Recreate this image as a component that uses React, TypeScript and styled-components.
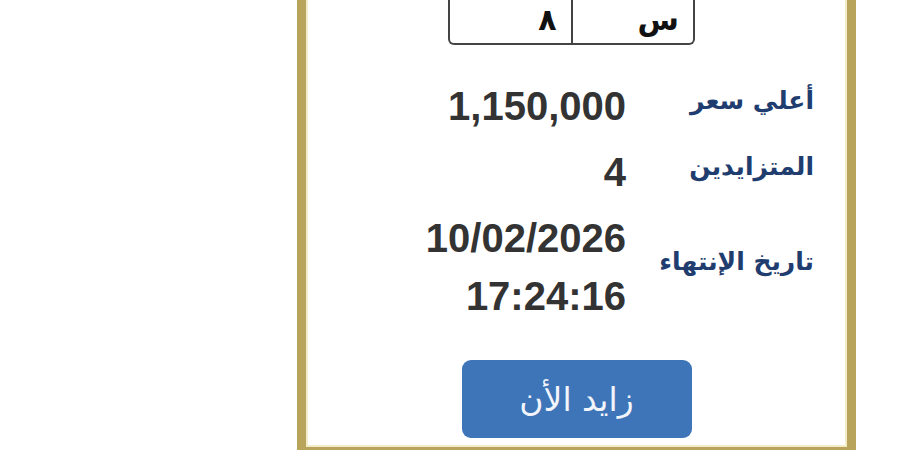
import React from 'react';
import styled, {createGlobalStyle} from "styled-components";

const GlobalStyle = createGlobalStyle`
  body {
    margin: 0;
    background: #ffffff;
    font-family: "DejaVu Sans", "Liberation Sans", sans-serif;
  }
`

type RowType = {
    label: string
    values: string[]
}

const rows: RowType[] = [
    {label: 'أعلي سعر', values: ['1,150,000']},
    {label: 'المتزايدين', values: ['4']},
    {label: 'تاريخ الإنتهاء', values: ['10/02/2026', '17:24:16']},
]

export default function App() {
    return (
        <Page>
            <GlobalStyle/>
            <Card dir="rtl">
                <Plate>
                    <PlateCell>س</PlateCell>
                    <PlateCell>٨</PlateCell>
                </Plate>
                <Details>
                    {rows.map(row => (
                        <React.Fragment key={row.label}>
                            <Label>{row.label}</Label>
                            <Value>
                                {row.values.map(v => <div key={v}>{v}</div>)}
                            </Value>
                        </React.Fragment>
                    ))}
                </Details>
                <BidButton>زايد الأن</BidButton>
            </Card>
        </Page>
    );
}

const Page = styled.div`
  width: 900px;
  height: 450px;
  overflow: hidden;
  padding-left: 297px;
  box-sizing: border-box;
`

const Card = styled.div`
  width: 559px;
  height: 456px;
  box-sizing: border-box;
  border: 9px solid #b9a45c;
  border-top: none;
  box-shadow: inset 2px 0 0 #f3eccb, inset -2px 0 0 #f3eccb, inset 0 -2px 0 #f3eccb;
  background: #ffffff;
  display: flex;
  flex-direction: column;
  align-items: center;
`

const Plate = styled.div`
  display: flex;
  width: 247px;
  height: 45px;
  box-sizing: border-box;
  border: 2px solid #444;
  border-top: none;
  border-radius: 0 0 6px 6px;
  margin-right: 10px;
`

const PlateCell = styled.div`
  flex: 1;
  display: flex;
  align-items: flex-end;
  padding: 0 14px 8px;
  font-size: 30px;
  font-weight: bold;
  line-height: 1;
  color: #111;

  & + & {
    border-right: 2px solid #444;
  }
`

const Details = styled.div`
  align-self: stretch;
  display: grid;
  grid-template-columns: 172px auto;
  justify-content: start;
  column-gap: 16px;
  row-gap: 8px;
  align-items: center;
  margin-top: 32px;
  padding-right: 33px;
`

const Label = styled.div`
  font-size: 25px;
  font-weight: bold;
  color: #1f3d6f;
  padding-bottom: 12px;
  white-space: nowrap;
`

const Value = styled.div`
  direction: ltr;
  text-align: right;
  font-family: "Liberation Sans", Arial, sans-serif;
  font-size: 40px;
  font-weight: bold;
  line-height: 58px;
  color: #333;
`

const BidButton = styled.button`
  margin-top: 35px;
  width: 230px;
  height: 78px;
  border: none;
  border-radius: 9px;
  background: #3e74b8;
  color: #f2f5fb;
  font-family: "DejaVu Sans", sans-serif;
  font-size: 33px;
  cursor: pointer;
`
